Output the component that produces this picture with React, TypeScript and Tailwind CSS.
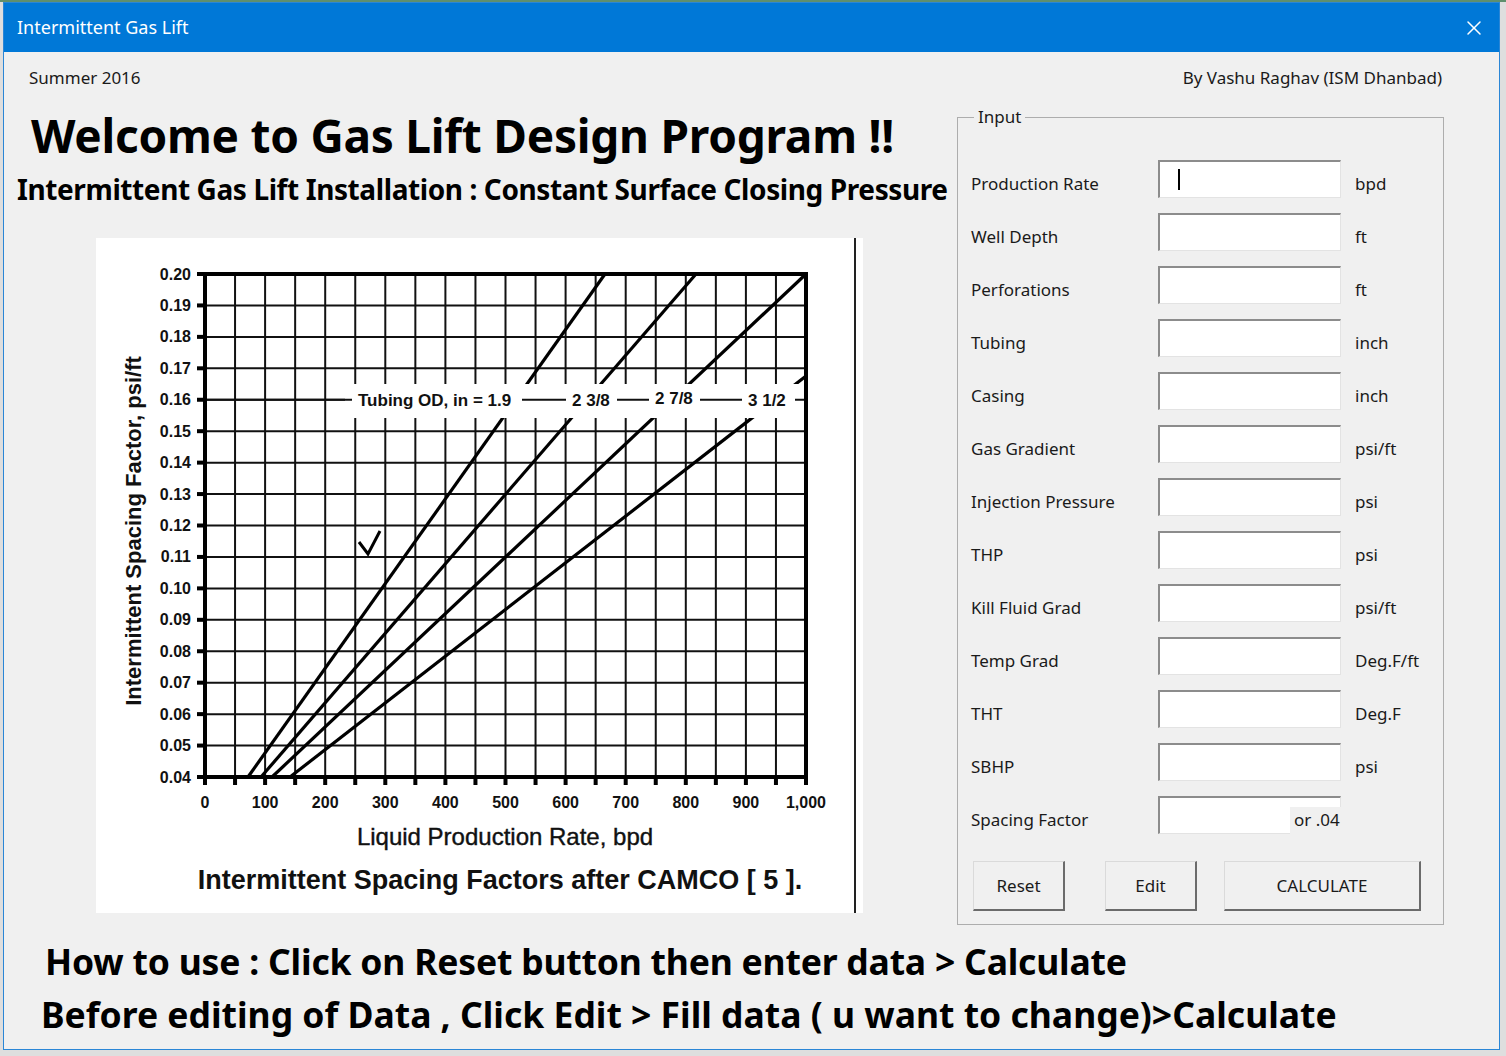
import { X } from "lucide-react";

const fields: [string, string][] = [
  ["Production Rate", "bpd"],
  ["Well Depth", "ft"],
  ["Perforations", "ft"],
  ["Tubing", "inch"],
  ["Casing", "inch"],
  ["Gas Gradient", "psi/ft"],
  ["Injection Pressure", "psi"],
  ["THP", "psi"],
  ["Kill Fluid Grad", "psi/ft"],
  ["Temp Grad", "Deg.F/ft"],
  ["THT", "Deg.F"],
  ["SBHP", "psi"],
];

// chart geometry, in page pixels
const X0 = 205;
const X1 = 806;
const Y0 = 274;
const Y1 = 777;
const cw = (X1 - X0) / 20;
const ch = (Y1 - Y0) / 16;

const cols = Array.from({ length: 21 }, (_, i) => X0 + i * cw);
const rowsY = Array.from({ length: 17 }, (_, j) => Y0 + j * ch);

const sans = "Liberation Sans, Arial, sans-serif";

function Chart() {
  return (
    <svg width={767} height={675} viewBox="96 238 767 675" className="block">
      <rect x={96} y={238} width={767} height={675} fill="#fff" />
      {/* grid */}
      {cols.map((x, i) => (
        <line key={"v" + i} x1={x} y1={Y0} x2={x} y2={Y1} stroke="#111" strokeWidth={2} />
      ))}
      {rowsY.map((y, j) => (
        <line key={"h" + j} x1={X0} y1={y} x2={X1} y2={y} stroke="#111" strokeWidth={2} />
      ))}
      {/* curves */}
      <g stroke="#000" strokeWidth={3.2} fill="none">
        <line x1={248} y1={777} x2={605} y2={274} />
        <line x1={261} y1={777} x2={696} y2={274} />
        <line x1={272} y1={777} x2={806} y2={274} />
        <line x1={290} y1={777} x2={806} y2={376} />
      </g>
      {/* label band */}
      <rect x={345} y={384} width={459} height={34} fill="#fff" />
      <line x1={X0} y1={rowsY[4]} x2={X1} y2={rowsY[4]} stroke="#111" strokeWidth={2} />
      <rect x={352} y={388} width={170} height={24} fill="#fff" />
      <rect x={566} y={388} width={51} height={24} fill="#fff" />
      <rect x={649} y={386} width={51} height={24} fill="#fff" />
      <rect x={742} y={388} width={53} height={24} fill="#fff" />
      <g fontFamily={sans} fontWeight="bold" fontSize={17} fill="#111" dominantBaseline="central">
        <text x={358} y={400}>Tubing OD, in = 1.9</text>
        <text x={572} y={400}>2 3/8</text>
        <text x={655} y={398}>2 7/8</text>
        <text x={748} y={400}>3 1/2</text>
      </g>
      {/* frame */}
      <rect x={X0} y={Y0} width={X1 - X0} height={Y1 - Y0} fill="none" stroke="#000" strokeWidth={4} />
      {/* ticks */}
      {rowsY.map((y, j) => (
        <rect key={"ty" + j} x={197} y={y - 2} width={8} height={4} fill="#000" />
      ))}
      {cols.map((x, i) => (
        <rect key={"tx" + i} x={x - 2} y={777} width={4} height={8} fill="#000" />
      ))}
      {/* axis numbers */}
      <g fontFamily={sans} fontWeight="bold" fontSize={16} fill="#111">
        {rowsY.map((y, j) => (
          <text key={"ly" + j} x={191} y={y} textAnchor="end" dominantBaseline="central">
            {(0.2 - j * 0.01).toFixed(2)}
          </text>
        ))}
        {cols
          .filter((_, i) => i % 2 === 0)
          .map((x, k) => (
            <text key={"lx" + k} x={x} y={802} textAnchor="middle" dominantBaseline="central">
              {k === 10 ? "1,000" : String(k * 100)}
            </text>
          ))}
      </g>
      {/* check mark */}
      <path d="M359 542 L368 554 L380 531" stroke="#000" strokeWidth={3} fill="none" />
      <text
        x={133}
        y={531}
        transform="rotate(-90 133 531)"
        fontFamily={sans}
        fontWeight="bold"
        fontSize={22}
        fill="#111"
        textAnchor="middle"
        dominantBaseline="central"
      >
        Intermittent Spacing Factor, psi/ft
      </text>
      <text
        x={505}
        y={836}
        fontFamily={sans}
        fontSize={24}
        fill="#111"
        stroke="#111"
        strokeWidth={0.4}
        textAnchor="middle"
        dominantBaseline="central"
      >
        Liquid Production Rate, bpd
      </text>
      <text
        x={500}
        y={880}
        fontFamily={sans}
        fontWeight="bold"
        fontSize={27}
        fill="#111"
        textAnchor="middle"
        dominantBaseline="central"
      >
        Intermittent Spacing Factors after CAMCO [ 5 ].
      </text>
      <line x1={855} y1={238} x2={855} y2={913} stroke="#222" strokeWidth={2} />
    </svg>
  );
}

const inputCls =
  "mb-[10px] h-[38px] w-[183px] bg-white border-t-2 border-l-2 border-r border-b border-t-[#8c8c8c] border-l-[#8c8c8c] border-r-[#e3e3e3] border-b-[#e3e3e3]";

const btnCls =
  "h-[50px] bg-[#f0f0f0] border-t border-l border-t-[#dadada] border-l-[#dadada] border-r-2 border-b-2 border-r-[#6b6b6b] border-b-[#6b6b6b] text-[17px] text-[#1a1a1a]";

export default function App() {
  return (
    <div className="w-[1506px] h-[1056px] overflow-hidden bg-[#dedede] font-['Noto_Sans',sans-serif]">
      <div className="h-[2px] bg-[#5f8f6d]" />
      <div className="ml-[3px] w-[1497px] h-[1048px] border border-[#2a86d6] flex flex-col bg-[#f0f0f0]">
        {/* title bar */}
        <div className="h-[49px] shrink-0 bg-[#0078d7] flex items-center justify-between pl-[13px] pr-[13px]">
          <span className="text-[18px] text-white">Intermittent Gas Lift</span>
          <X className="text-white" size={24} strokeWidth={1.5} />
        </div>

        <div className="h-[52px] flex items-center justify-between pl-[25px] pr-[57px] text-[17px] text-[#1a1a1a]">
          <span>Summer 2016</span>
          <span>By Vashu Raghav (ISM Dhanbad)</span>
        </div>

        <div className="h-[821px] flex">
          <div className="w-[953px]">
            <div className="h-[62px] flex items-center pl-[27px] text-[46px] tracking-[-0.25px] font-bold leading-none text-black whitespace-nowrap">
              Welcome to Gas Lift Design Program !!
            </div>
            <div className="h-[46px] flex items-center pl-[13px] text-[28px] tracking-[-0.4px] font-bold leading-none text-black whitespace-nowrap">
              Intermittent Gas Lift Installation : Constant Surface Closing Pressure
            </div>
            <div className="mt-[26px] ml-[92px] w-[767px] h-[675px]">
              <Chart />
            </div>
          </div>

          <fieldset className="mt-[3px] w-[487px] h-[818px] border border-[#adadad] pt-[30px] pl-[13px] text-[17px] text-[#1a1a1a]">
            <legend className="ml-[3px] px-[4px] leading-[20px]">Input</legend>
            {fields.map(([label, unit], i) => (
              <div key={label} className="h-[53px] flex items-center">
                <span className="w-[187px]">{label}</span>
                <div className={inputCls + " flex items-center"}>
                  {i === 0 && <span className="ml-[18px] w-[2px] h-[21px] bg-black" />}
                </div>
                <span className="ml-[14px]">{unit}</span>
              </div>
            ))}
            <div className="h-[53px] flex items-center">
              <span className="w-[187px]">Spacing Factor</span>
              <div className={inputCls + " relative"}>
                <span className="absolute left-[130px] top-[9px] w-[56px] h-[28px] bg-[#f0f0f0] pl-[4px] leading-[26px]">
                  or .04
                </span>
              </div>
            </div>
            <div className="mt-[15px] flex">
              <button className={btnCls + " ml-[2px] w-[92px]"}>Reset</button>
              <button className={btnCls + " ml-[40px] w-[92px]"}>Edit</button>
              <button className={btnCls + " ml-[27px] w-[197px]"}>CALCULATE</button>
            </div>
          </fieldset>
        </div>

        <div className="pt-[10px] pl-[37px] text-[35.5px] font-bold leading-[53px] text-black whitespace-nowrap">
          <div className="ml-[4px] tracking-[-0.2px]">
            How to use : Click on Reset button then enter data &gt; Calculate
          </div>
          <div>Before editing of Data , Click Edit &gt; Fill data ( u want to change)&gt;Calculate</div>
        </div>
      </div>
    </div>
  );
}
